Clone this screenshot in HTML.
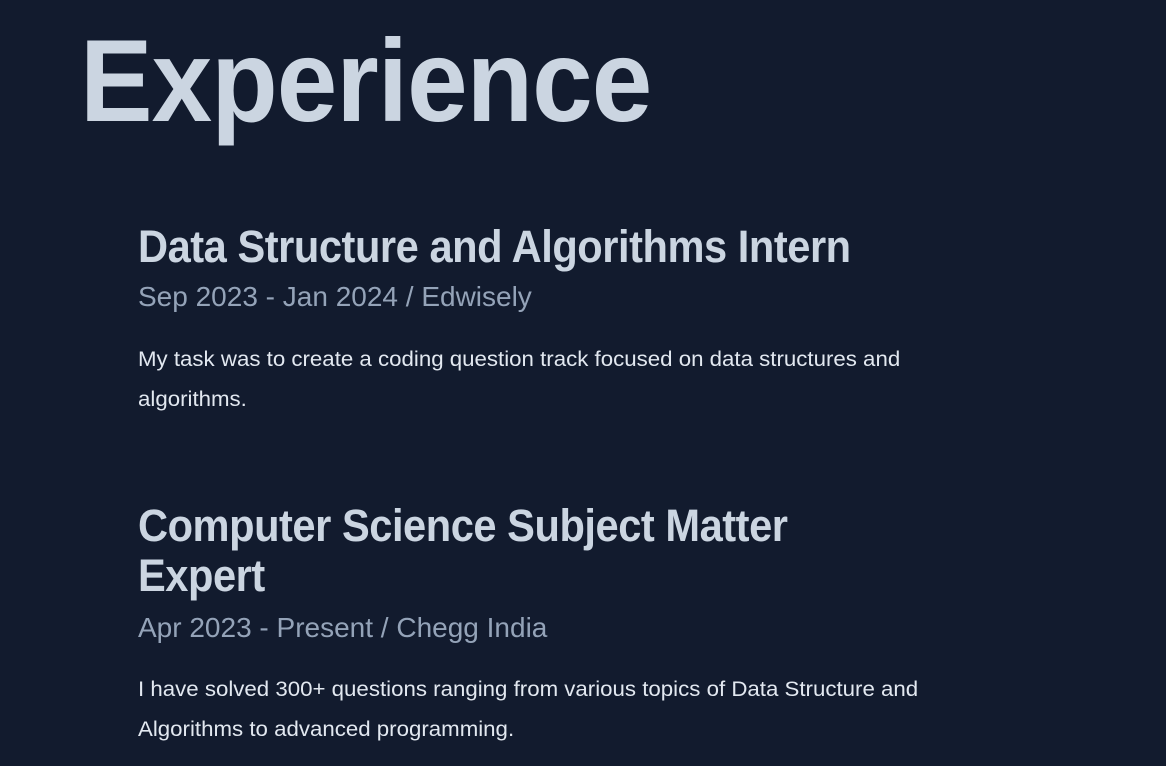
<!DOCTYPE html>
<html><head><meta charset="utf-8"><style>
html,body{margin:0;padding:0;width:1166px;height:766px;overflow:hidden;background:#121b2e;font-family:"Liberation Sans",sans-serif;}
.t{position:absolute;white-space:nowrap;line-height:1;transform-origin:0 0;}
.h1{left:80px;top:22px;font-size:117px;font-weight:bold;color:#cbd5e1;transform:scaleX(0.93);letter-spacing:-1px}
.h2{left:138px;font-size:45px;font-weight:bold;color:#cbd5e1;transform:scaleX(0.925);letter-spacing:-0.5px}
.sub{left:138px;font-size:28px;color:#94a3b8;transform:scaleX(1.0)}
.p{left:138px;font-size:21px;color:#e2e8f0;transform:scaleX(1.06)}
</style></head><body>
<div class="t h1">Experience</div>
<div class="t h2" style="top:224px">Data Structure and Algorithms Intern</div>
<div class="t sub" style="top:283px">Sep 2023 - Jan 2024 / Edwisely</div>
<div class="t p" style="top:349px">My task was to create a coding question track focused on data structures and</div>
<div class="t p" style="top:389px">algorithms.</div>
<div class="t h2" style="top:503px">Computer Science Subject Matter</div>
<div class="t h2" style="top:553px">Expert</div>
<div class="t sub" style="top:614px">Apr 2023 - Present / Chegg India</div>
<div class="t p" style="top:679px">I have solved 300+ questions ranging from various topics of Data Structure and</div>
<div class="t p" style="top:719px">Algorithms to advanced programming.</div>
</body></html>
